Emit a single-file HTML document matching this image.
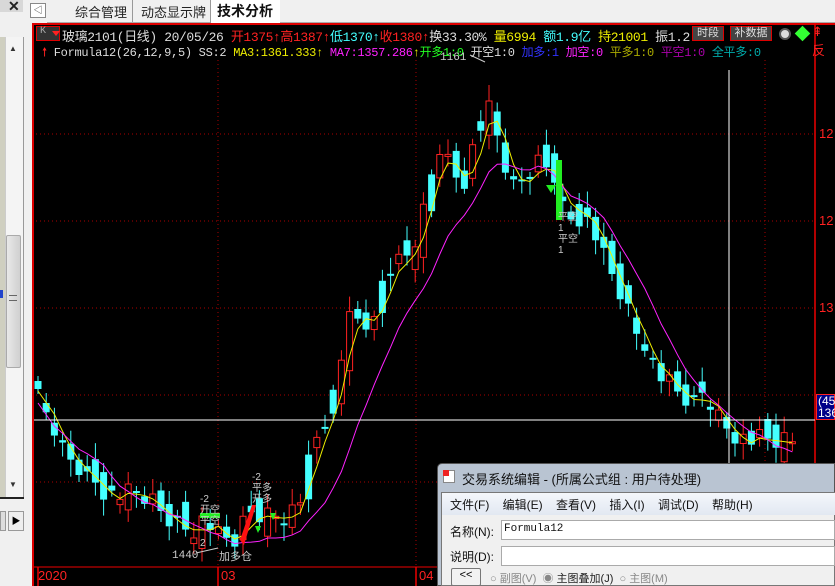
<!DOCTYPE html>
<html><head><meta charset="utf-8">
<style>
*{margin:0;padding:0;box-sizing:border-box}
body{width:835px;height:586px;overflow:hidden;background:#f0f0f0;font-family:"Liberation Sans","Noto Sans CJK SC",sans-serif;position:relative}
.abs{position:absolute}
.mono{font-family:"Liberation Mono","Noto Sans CJK SC",monospace}
</style></head><body>
<div class="abs" style="left:0;top:0;width:835px;height:23px;background:#f0f0f0"></div>
<div class="abs" style="left:0;top:0;width:23px;height:12px;background:#d8d8d8"></div>
<div class="abs" style="left:8px;top:-2px;font-size:14px;font-weight:bold;color:#222">✕</div>
<div class="abs" style="left:30px;top:3px;width:16px;height:15px;border:1px solid #888;background:#fff;font-size:9px;line-height:13px;text-align:center;color:#333">◁</div>
<div class="abs" style="left:47px;top:22px;width:790px;height:1px;background:#aaa"></div>
<div class="abs" style="left:75px;top:2px;font-size:13px;color:#222">综合管理</div>
<div class="abs" style="left:132px;top:0;width:1px;height:22px;background:#999"></div>
<div class="abs" style="left:141px;top:2px;font-size:13px;color:#222">动态显示牌</div>
<div class="abs" style="left:210px;top:0;width:70px;height:23px;background:#fff;border-left:1px solid #999"></div>
<div class="abs" style="left:217px;top:1px;font-size:14px;font-weight:bold;color:#111">技术分析</div>
<div class="abs" style="left:0;top:37px;width:5px;height:460px;background:#cfcfc0"></div>
<div class="abs" style="left:5px;top:37px;width:18px;height:460px;background:#f4f4f4;border-left:1px solid #ccc"></div>
<div class="abs" style="left:9px;top:44px;font-size:8px;color:#333">▲</div>
<div class="abs" style="left:6px;top:235px;width:15px;height:133px;background:linear-gradient(90deg,#e8e8e8,#d0d0d0);border:1px solid #aaa;border-radius:2px"></div>
<div class="abs" style="left:9px;top:295px;width:8px;height:6px;border-top:1px solid #666;border-bottom:1px solid #666"></div>
<div class="abs" style="left:9px;top:480px;font-size:8px;color:#333">▼</div>
<div class="abs" style="left:0;top:290px;width:3px;height:8px;background:#24c"></div>
<div class="abs" style="left:23px;top:37px;width:1px;height:460px;background:#999"></div>
<div class="abs" style="left:0;top:497px;width:24px;height:2px;background:#222"></div>
<div class="abs" style="left:0;top:511px;width:6px;height:20px;background:#ddd;border:1px solid #999"></div>
<div class="abs" style="left:8px;top:511px;width:16px;height:20px;background:#eee;border:1px solid #999;font-size:9px;line-height:18px;text-align:center">▶</div>
<div class="abs" style="left:32px;top:23px;width:803px;height:563px;background:#000;border-left:2px solid #d00;border-top:2px solid #d00"></div>
<svg class="abs" id="ch" style="left:0;top:0" width="835" height="586"></svg>
<div class="abs" style="left:36px;top:26px;width:24px;height:15px;border:1px solid #d00;background:#333"></div>
<div class="abs mono" style="left:40px;top:26px;font-size:10px;color:#aaa">K</div>
<div class="abs" style="left:52px;top:31px;width:0;height:0;border-left:4px solid transparent;border-right:4px solid transparent;border-top:5px solid #f22"></div>
<div class="abs mono" style="left:62px;top:26px;font-size:13px;white-space:nowrap;letter-spacing:-0.4px;color:#ddd">玻璃2101(日线) 20/05/26 <span style="color:#f22">开1375↑高1387↑</span><span style="color:#4ff">低1370↑</span><span style="color:#f22">收1380↑</span><span style="color:#ddd">换33.30% </span><span style="color:#ee0">量6994 </span><span style="color:#4ff">额1.9亿 </span><span style="color:#ee0">持21001 </span>振1.2</div>
<div class="abs" style="left:692px;top:26px;width:32px;height:15px;border:1px solid #d00;background:#444;color:#ddd;font-size:11px;text-align:center;line-height:13px">时段</div>
<div class="abs" style="left:730px;top:26px;width:42px;height:15px;border:1px solid #d00;background:#444;color:#ddd;font-size:11px;text-align:center;line-height:13px">补数据</div>
<div class="abs" style="left:779px;top:28px;width:12px;height:12px;border-radius:50%;background:#ddd;border:2px solid #555"></div>
<div class="abs" style="left:797px;top:28px;width:11px;height:11px;background:#3f3;transform:rotate(45deg)"></div>
<div class="abs" style="left:812px;top:24px;font-size:13px;color:#f22">⇞ 反</div>
<div class="abs mono" style="left:42px;top:43px;font-size:12px;white-space:nowrap;color:#ddd;letter-spacing:-0.3px"><span style="color:#f22">🠕</span> Formula12(26,12,9,5) SS:2 <span style="color:#ee0">MA3:1361.333↑</span> <span style="color:#f2f">MA7:1357.286</span><span style="color:#ee0">↑</span><span style="color:#2f2">开多1:0</span> 开空1:0 <span style="color:#33f">加多:1</span> <span style="color:#f2f">加空:0</span> <span style="color:#aa0">平多1:0</span> <span style="color:#a0a">平空1:0</span> <span style="color:#0aa">全平多:0</span></div>
<div class="abs" style="left:819px;top:126px;font-size:13px;color:#f22">12</div>
<div class="abs" style="left:819px;top:213px;font-size:13px;color:#f22">12</div>
<div class="abs" style="left:819px;top:300px;font-size:13px;color:#f22">13</div>
<div class="abs" style="left:816px;top:394px;width:19px;height:26px;background:#008;border:1px solid #f22;color:#fff;font-size:12px;line-height:12px;padding-left:1px">(45<br>136</div>
<div class="abs" style="left:38px;top:568px;font-size:13px;color:#f22">2020</div>
<div class="abs" style="left:221px;top:568px;font-size:13px;color:#f22">03</div>
<div class="abs" style="left:419px;top:568px;font-size:13px;color:#f22">04</div>
<div class="abs mono" style="left:440px;top:52px;font-size:11px;color:#ccc">1161</div>
<div class="abs mono" style="left:172px;top:550px;font-size:11px;color:#ccc">1440</div>
<div class="abs" style="left:219px;top:548px;font-size:11px;color:#ccc">加多仓</div>
<div class="abs" style="left:200px;top:494px;font-size:10px;color:#ccc;line-height:11px">-2<br>开空<br>平空<br><br>2</div>
<div class="abs" style="left:252px;top:472px;font-size:10px;color:#ccc;line-height:11px">-2<br>平多<br>开多</div>
<div class="abs" style="left:558px;top:212px;font-size:10px;color:#ccc;line-height:11px">平空<br>1<br>平空<br>1</div>
<div class="abs" style="left:437px;top:463px;width:398px;height:123px;background:#b9c4d2;border:1px solid #555;border-radius:5px 0 0 0"></div>
<div class="abs" style="left:443px;top:470px;width:12px;height:13px;background:#fff;border:1px solid #888"></div>
<div class="abs" style="left:443px;top:470px;width:6px;height:6px;background:#e22"></div>
<div class="abs" style="left:462px;top:469px;font-size:13px;color:#111">交易系统编辑 - (所属公式组 : 用户待处理)</div>
<div class="abs" style="left:441px;top:492px;width:394px;height:94px;background:#f0f0f0;border:1px solid #777"></div>
<div class="abs" style="left:442px;top:493px;width:393px;height:22px;background:linear-gradient(#f4f7fb,#e2e8f2)"></div>
<div class="abs" style="left:450px;top:496px;font-size:12px;color:#111;word-spacing:10px;white-space:nowrap">文件(F) 编辑(E) 查看(V) 插入(I) 调试(D) 帮助(H)</div>
<div class="abs" style="left:450px;top:523px;font-size:12px;color:#111">名称(N):</div>
<div class="abs" style="left:501px;top:520px;width:334px;height:20px;background:#fff;border:1px solid #aaa"></div>
<div class="abs mono" style="left:504px;top:523px;font-size:11px;color:#111">Formula12</div>
<div class="abs" style="left:450px;top:548px;font-size:12px;color:#111">说明(D):</div>
<div class="abs" style="left:501px;top:546px;width:334px;height:20px;background:#fff;border:1px solid #aaa"></div>
<div class="abs" style="left:451px;top:568px;width:30px;height:18px;background:#f2f2f2;border:1px solid #777;border-radius:2px;font-size:11px;text-align:center">&lt;&lt;</div>
<div class="abs" style="left:490px;top:570px;font-size:11px;color:#888;white-space:nowrap">○ 副图(V) &nbsp;◉ <span style="color:#222">主图叠加(J)</span> &nbsp;○ 主图(M)</div>
<script>
var s=document.getElementById('ch'),h='';
function L(x1,y1,x2,y2,c,w,d){h+='<line x1="'+x1+'" y1="'+y1+'" x2="'+x2+'" y2="'+y2+'" stroke="'+c+'" stroke-width="'+(w||1)+'"'+(d?' stroke-dasharray="'+d+'"':'')+'/>';}
[134,221,308,395,482].forEach(function(y){L(36,y,815,y,'#a00',1,'1,3');});
[218,416,765].forEach(function(x){L(x,60,x,566,'#a00',1,'1,3');});
L(815,23,815,586,'#e00',1.5);L(34,567,815,567,'#e00',1);
[38,218,416].forEach(function(x){L(x,567,x,586,'#e00',1.5);});
var pts=[[38,400],[55,430],[65,455],[90,475],[110,495],[140,495],[150,500],[165,515],[190,530],[205,518],[220,540],[235,540],[250,512],[270,515],[290,512],[300,500],[310,460],[320,430],[330,412],[340,370],[350,300],[365,330],[380,290],[390,270],[405,262],[420,230],[430,180],[440,145],[455,175],[465,178],[475,140],[485,100],[495,130],[505,165],[515,192],[525,175],[540,160],[555,172],[565,215],[585,215],[595,232],[605,260],[615,280],[625,300],[635,330],[645,340],[655,370],[675,392],[695,405],[705,388],[715,412],[725,425],[745,440],[800,442]];
function py(x){for(var i=1;i<pts.length;i++){if(x<=pts[i][0]){var a=pts[i-1],b=pts[i];return a[1]+(b[1]-a[1])*(x-a[0])/(b[0]-a[0]);}}return 442;}
var cl=[],xs=[],prev=395,k=0;
for(var x=38;x<=800;x+=8.2){var c=py(x)+((k*37)%11-5)*2.2;var o=prev+((k*53)%9-4)*3.5;var hi=Math.min(o,c)-5-(k*17)%12,lo=Math.max(o,c)+5+(k*29)%13;
var up=c<o,col=(k%3==0)?'#4ff':(up?'#f22':'#4ff');
L(x,hi,x,lo,col);var t=Math.min(o,c),bh=Math.max(2,Math.abs(o-c));
if(col=='#4ff')h+='<rect x="'+(x-3.5)+'" y="'+t+'" width="7" height="'+bh+'" fill="#4ff"/>';else h+='<rect x="'+(x-3)+'" y="'+t+'" width="6" height="'+bh+'" fill="#000" stroke="#f22"/>';
cl.push(c);xs.push(x);prev=c;k++;}
function ma(n,col,off){var p='';for(var i=0;i<cl.length;i++){var a=0,m=Math.min(n,i+1);for(var j=0;j<m;j++)a+=cl[i-j];p+=(i?'L':'M')+xs[i]+','+(a/m+off);}h+='<path d="'+p+'" fill="none" stroke="'+col+'" stroke-width="1"/>';}
ma(3,'#ee0',2);ma(9,'#f2f',14);
L(34,420,815,420,'#fff',1);L(729,70,729,566,'#fff',1);
h+='<rect x="556" y="160" width="6" height="60" fill="#2e2"/><polygon points="546,185 556,185 551,193" fill="#2e2"/>';
h+='<polygon points="240,540 252,505 256,505 244,545" fill="#f11"/><rect x="200" y="513" width="20" height="5" fill="#2e2"/>';
h+='<polygon points="270,513 276,513 273,520" fill="#2e2"/><polygon points="255,526 261,526 258,533" fill="#2e2"/>';
L(485,62,470,55,'#ccc');L(196,553,218,548,'#ccc');
s.innerHTML=h;
</script>
</body></html>
